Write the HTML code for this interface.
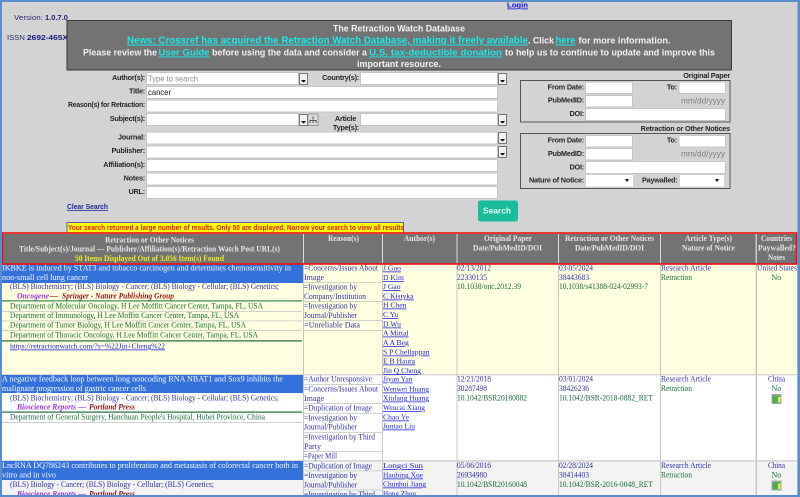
<!DOCTYPE html>
<html><head><meta charset="utf-8"><title>Retraction Watch Database</title>
<style>
html,body{margin:0;padding:0;width:800px;height:497px;overflow:hidden;background:#d3d3d3}
svg{display:block;filter:blur(.35px)}
text{white-space:pre}
.l{font:bold 7.3px "Liberation Sans",sans-serif;letter-spacing:-.22px;fill:#262626;text-anchor:end}
.i{font:8px "Liberation Sans",sans-serif;fill:#222}
.b{font:bold 9.2px "Liberation Sans",sans-serif;fill:#f2f2f2}
.c{font:bold 9.9px "Liberation Sans",sans-serif;fill:#19e8e8;text-decoration:underline}
.c2{font:bold 9.2px "Liberation Sans",sans-serif;fill:#19e8e8;text-decoration:underline}
.h{font:bold 8.1px "Liberation Serif",serif;fill:#e6e6e6}
.t{font:8.3px "Liberation Serif",serif;fill:#f4f6ff}
.s{font:8px "Liberation Serif",serif;fill:#3232a6}
.g{font:8px "Liberation Serif",serif;fill:#1c6b3c}
.a{font:7.6px "Liberation Serif",serif;fill:#1f1fe0;text-decoration:underline}
.p{font:italic bold 8px "Liberation Serif",serif;fill:#9a33d6}
.r{font:italic bold 8px "Liberation Serif",serif;fill:#8b1414}
</style></head><body>
<svg width="800" height="497" viewBox="0 0 800 497" xmlns="http://www.w3.org/2000/svg">
<rect width="800" height="497" fill="#d3d3d3"/>

<!-- version -->
<text x="14" y="20" style="font:7.6px 'Liberation Sans',sans-serif;fill:#2c2c78" textLength="29" lengthAdjust="spacingAndGlyphs">Version:</text>
<text x="45" y="20" style="font:bold 7.6px 'Liberation Sans',sans-serif;fill:#1c1c80" textLength="23" lengthAdjust="spacingAndGlyphs">1.0.7.0</text>
<text x="7" y="40" style="font:7.6px 'Liberation Sans',sans-serif;fill:#2c2c78" textLength="18" lengthAdjust="spacingAndGlyphs">ISSN</text>
<text x="27" y="40" style="font:bold 7.6px 'Liberation Sans',sans-serif;fill:#1c1c80" textLength="41" lengthAdjust="spacingAndGlyphs">2692-465X</text>
<text x="507" y="7.500" style="font:bold 7.6px 'Liberation Sans',sans-serif;fill:#1414e0;text-decoration:underline" textLength="21" lengthAdjust="spacingAndGlyphs">Login</text>

<!-- banner -->
<rect x="67" y="20.500" width="664.500" height="49.500" fill="#737373" stroke="#3a3a3a" stroke-width="1"/>
<text x="333" y="31.500" class="b" textLength="132" lengthAdjust="spacingAndGlyphs">The Retraction Watch Database</text>
<text x="127" y="43.500" class="c" textLength="401" lengthAdjust="spacingAndGlyphs">News: Crossref has acquired the Retraction Watch Database, making it freely available</text>
<text x="528" y="43.500" class="b" textLength="26" lengthAdjust="spacingAndGlyphs">. Click</text>
<text x="555.500" y="43.500" class="c" textLength="20" lengthAdjust="spacingAndGlyphs">here</text>
<text x="578.500" y="43.500" class="b" textLength="92" lengthAdjust="spacingAndGlyphs">for more information.</text>
<text x="83" y="55.500" class="b" textLength="74" lengthAdjust="spacingAndGlyphs">Please review the</text>
<text x="158.500" y="55.500" class="c2" textLength="51" lengthAdjust="spacingAndGlyphs">User Guide</text>
<text x="212" y="55.500" class="b" textLength="155" lengthAdjust="spacingAndGlyphs">before using the data and consider a</text>
<text x="369" y="55.500" class="c2" textLength="133" lengthAdjust="spacingAndGlyphs">U.S. tax-deductible donation</text>
<text x="505" y="55.500" class="b" textLength="210" lengthAdjust="spacingAndGlyphs">to help us to continue to update and improve this</text>
<text x="357" y="67" class="b" textLength="84" lengthAdjust="spacingAndGlyphs">important resource.</text>

<!-- left form inputs -->
<g fill="#fff" stroke="#c6c6c6" stroke-width="1">
<rect x="146.500" y="72.500" width="152" height="12"/>
<rect x="146.500" y="86.500" width="351" height="12"/>
<rect x="146.500" y="100" width="351" height="12"/>
<rect x="146.500" y="113.500" width="152" height="12"/>
<rect x="360.500" y="72.500" width="137" height="12"/>
<rect x="360.500" y="113.500" width="137" height="12"/>
<rect x="146.500" y="132" width="351" height="12"/>
<rect x="146.500" y="146" width="351" height="12"/>
<rect x="146.500" y="159.500" width="351" height="12"/>
<rect x="146.500" y="173" width="351" height="12"/>
<rect x="146.500" y="186.500" width="351" height="12"/>
</g>
<text x="148" y="81.500" class="i" style="fill:#8e8e8e" textLength="50" lengthAdjust="spacingAndGlyphs">Type to search</text>
<text x="148" y="95" class="i" textLength="23" lengthAdjust="spacingAndGlyphs">cancer</text>

<!-- dropdown buttons -->
<g fill="#f2f2f2" stroke="#777" stroke-width="1">
<rect x="299.500" y="73.500" width="8" height="11"/>
<rect x="299.500" y="114.500" width="8" height="11"/>
<rect x="498.500" y="73.500" width="8" height="11"/>
<rect x="498.500" y="114.500" width="8" height="11"/>
<rect x="498.500" y="132.500" width="8" height="11"/>
<rect x="498.500" y="146.500" width="8" height="11"/>
</g>
<g fill="#111">
<path d="M301.500 80h4v1l-2 1.500-2-1.500z"/>
<path d="M301.500 121h4v1l-2 1.500-2-1.500z"/>
<path d="M500.500 80h4v1l-2 1.500-2-1.500z"/>
<path d="M500.500 121h4v1l-2 1.500-2-1.500z"/>
<path d="M500.500 139h4v1l-2 1.500-2-1.500z"/>
<path d="M500.500 153h4v1l-2 1.500-2-1.500z"/>
</g>
<rect x="308" y="114" width="10" height="11.500" fill="#dcdcdc" stroke="#8a8a8a" stroke-width=".8"/>
<path d="M313 116.500v3M310 123v-2.500h6v2.500M313 120.500v2.500" fill="none" stroke="#555" stroke-width="1"/>

<!-- labels -->
<text x="145" y="80" class="l">Author(s):</text>
<text x="145" y="93.500" class="l">Title:</text>
<text x="145" y="107" class="l" textLength="77" lengthAdjust="spacingAndGlyphs" style="text-anchor:start" dx="-77">Reason(s) for Retraction:</text>
<text x="145" y="121" class="l">Subject(s):</text>
<text x="359" y="80" class="l">Country(s):</text>
<text x="345.500" y="121" class="l" style="text-anchor:middle">Article</text>
<text x="359" y="130" class="l">Type(s):</text>
<text x="145" y="139.500" class="l">Journal:</text>
<text x="145" y="153" class="l">Publisher:</text>
<text x="145" y="167" class="l">Affiliation(s):</text>
<text x="145" y="180.500" class="l">Notes:</text>
<text x="145" y="194" class="l">URL:</text>

<!-- Original paper box -->
<text x="730" y="78" class="l">Original Paper</text>
<rect x="520.500" y="80.500" width="209.500" height="41.500" fill="none" stroke="#555" stroke-width="1"/>
<g fill="#fff" stroke="#c6c6c6" stroke-width="1">
<rect x="585.500" y="82" width="47" height="11.500"/>
<rect x="679" y="82" width="46.500" height="11.500"/>
<rect x="585.500" y="95.500" width="47" height="11.500"/>
<rect x="585.500" y="108.500" width="140" height="12"/>
</g>
<text x="584" y="89.500" class="l">From Date:</text>
<text x="677" y="89.500" class="l">To:</text>
<text x="584" y="102.500" class="l">PubMedID:</text>
<text x="584" y="116" class="l">DOI:</text>
<text x="681" y="103.500" style="font:8px 'Liberation Sans',sans-serif;fill:#808080" textLength="44" lengthAdjust="spacingAndGlyphs">mm/dd/yyyy</text>

<!-- Notices box -->
<text x="730" y="131" class="l">Retraction or Other Notices</text>
<rect x="520.500" y="133.500" width="209.500" height="55" fill="none" stroke="#555" stroke-width="1"/>
<g fill="#fff" stroke="#c6c6c6" stroke-width="1">
<rect x="585.500" y="135.500" width="47" height="11.500"/>
<rect x="679" y="135.500" width="46.500" height="11.500"/>
<rect x="585.500" y="148.500" width="47" height="11.500"/>
<rect x="585.500" y="161.500" width="140" height="12"/>
</g>
<rect x="586" y="175" width="47" height="11.500" fill="#fff"/>
<rect x="680" y="175" width="44" height="11.500" fill="#fff"/>
<path d="M625 179h4l-2 3zM715 179h4l-2 3z" fill="#111"/>
<text x="584" y="142.500" class="l">From Date:</text>
<text x="677" y="142.500" class="l">To:</text>
<text x="584" y="156" class="l">PubMedID:</text>
<text x="584" y="169.500" class="l">DOI:</text>
<text x="584" y="182.500" class="l">Nature of Notice:</text>
<text x="677.500" y="182.500" class="l">Paywalled:</text>
<text x="681" y="156.500" style="font:8px 'Liberation Sans',sans-serif;fill:#808080" textLength="44" lengthAdjust="spacingAndGlyphs">mm/dd/yyyy</text>

<!-- search / clear -->
<rect x="478" y="200.500" width="40" height="21" rx="2.500" fill="#1abc9c"/>
<text x="483" y="213.500" style="font:bold 8.600px 'Liberation Sans',sans-serif;fill:#e8fff8" textLength="28" lengthAdjust="spacingAndGlyphs">Search</text>
<text x="67" y="209" style="font:bold 7.600px 'Liberation Sans',sans-serif;fill:#23239a;text-decoration:underline" textLength="41" lengthAdjust="spacingAndGlyphs">Clear Search</text>

<!-- warning -->
<rect x="67" y="222.500" width="336.500" height="10.500" fill="#ffff00" stroke="#3a3ad0" stroke-width=".8"/>
<text x="68" y="230" style="font:bold 7px 'Liberation Sans',sans-serif;fill:#d61c1c" textLength="336" lengthAdjust="spacingAndGlyphs">Your search returned a large number of results. Only 50 are displayed. Narrow your search to view all results</text>

<!-- table backgrounds -->
<rect x="2" y="264" width="795" height="110.500" fill="#ffffe2"/>
<rect x="2" y="375" width="795" height="86" fill="#fff"/>
<rect x="2" y="461" width="795" height="34" fill="#f3f3f3"/>
<rect x="2" y="234" width="795" height="30" fill="#737373"/>

<g fill="#c8c8c8">
<rect x="2" y="374.300" width="795" height="1"/>
<rect x="2" y="460.300" width="795" height="1.200"/>
<rect x="303" y="234" width="1" height="262"/>
<rect x="382" y="234" width="1" height="262"/>
<rect x="456.500" y="234" width="1" height="262"/>
<rect x="558" y="234" width="1" height="262"/>
<rect x="660" y="234" width="1" height="262"/>
<rect x="755.500" y="234" width="1.500" height="262"/>
</g>
<g fill="#dcdcdc">
<rect x="303" y="234" width="1" height="29"/><rect x="382" y="234" width="1" height="29"/><rect x="456.500" y="234" width="1" height="29"/><rect x="558" y="234" width="1" height="29"/><rect x="660" y="234" width="1" height="29"/>
</g>

<!-- header text -->
<text x="105" y="242.500" class="h" textLength="89" lengthAdjust="spacingAndGlyphs">Retraction or Other Notices</text>
<text x="19" y="251.500" class="h" textLength="261" lengthAdjust="spacingAndGlyphs">Title/Subject(s)/Journal — Publisher/Affiliation(s)/Retraction Watch Post URL(s)</text>
<text x="75" y="261" class="h" style="fill:#e8e82a" textLength="149" lengthAdjust="spacingAndGlyphs">50 Items Displayed Out of 3,056 Item(s) Found</text>
<text x="328" y="241" class="h" textLength="31" lengthAdjust="spacingAndGlyphs">Reason(s)</text>
<text x="404" y="241" class="h" textLength="31" lengthAdjust="spacingAndGlyphs">Author(s)</text>
<text x="484" y="241" class="h" textLength="48" lengthAdjust="spacingAndGlyphs">Original Paper</text>
<text x="473" y="250.500" class="h" textLength="69" lengthAdjust="spacingAndGlyphs">Date/PubMedID/DOI</text>
<text x="565" y="241" class="h" textLength="89" lengthAdjust="spacingAndGlyphs">Retraction or Other Notices</text>
<text x="575" y="250.500" class="h" textLength="69" lengthAdjust="spacingAndGlyphs">Date/PubMedID/DOI</text>
<text x="685" y="241" class="h" textLength="47" lengthAdjust="spacingAndGlyphs">Article Type(s)</text>
<text x="682" y="250.500" class="h" textLength="53" lengthAdjust="spacingAndGlyphs">Nature of Notice</text>
<text x="761" y="241" class="h" textLength="31" lengthAdjust="spacingAndGlyphs">Countries</text>
<text x="758" y="250.500" class="h" textLength="38" lengthAdjust="spacingAndGlyphs">Paywalled?</text>
<text x="768" y="260" class="h" textLength="17" lengthAdjust="spacingAndGlyphs">Notes</text>

<!-- row 1 -->
<svg x="0" y="264" width="800" height="111" viewBox="0 264 800 111">
<rect x="2" y="264" width="301" height="19" fill="#3571da"/>
<text x="2" y="270.500" class="t" textLength="289" lengthAdjust="spacingAndGlyphs">IKBKE is induced by STAT3 and tobacco carcinogen and determines chemosensitivity in</text>
<text x="2" y="280" class="t" textLength="86" lengthAdjust="spacingAndGlyphs">non-small cell lung cancer</text>
<text x="10" y="289" class="s" textLength="269" lengthAdjust="spacingAndGlyphs">(BLS) Biochemistry; (BLS) Biology - Cancer; (BLS) Biology - Cellular; (BLS) Genetics;</text>
<text x="17" y="298.500" class="p" textLength="32" lengthAdjust="spacingAndGlyphs">Oncogene</text>
<text x="50" y="298.500" class="p" style="fill:#8b1414" textLength="8" lengthAdjust="spacingAndGlyphs">—</text>
<text x="62" y="298.500" class="r" textLength="112" lengthAdjust="spacingAndGlyphs">Springer - Nature Publishing Group</text>
<rect x="2" y="300.300" width="300" height="1.200" fill="#3a8a58"/>
<text x="10" y="308.500" class="g" textLength="253" lengthAdjust="spacingAndGlyphs">Department of Molecular Oncology, H Lee Moffitt Cancer Center, Tampa, FL, USA</text>
<rect x="2" y="311" width="300" height=".8" fill="#c8c8c8"/>
<text x="10" y="318" class="g" textLength="229" lengthAdjust="spacingAndGlyphs">Department of Immunology, H Lee Moffitt Cancer Center, Tampa, FL, USA</text>
<rect x="2" y="320.500" width="300" height=".8" fill="#c8c8c8"/>
<text x="10" y="327.500" class="g" textLength="236" lengthAdjust="spacingAndGlyphs">Department of Tumor Biology, H Lee Moffitt Cancer Center, Tampa, FL, USA</text>
<rect x="2" y="330" width="300" height=".8" fill="#c8c8c8"/>
<text x="10" y="337.500" class="g" textLength="248" lengthAdjust="spacingAndGlyphs">Department of Thoracic Oncology, H Lee Moffitt Cancer Center, Tampa, FL, USA</text>
<rect x="2" y="340.300" width="300" height="1.200" fill="#1f6b3a"/>
<text x="10" y="348.500" class="a" textLength="155" lengthAdjust="spacingAndGlyphs">https://retractionwatch.com/?s=%22Jin+Cheng%22</text>

<text x="304" y="270.500" class="s" textLength="74" lengthAdjust="spacingAndGlyphs">=Concerns/Issues About</text>
<text x="304" y="280" class="s" textLength="20" lengthAdjust="spacingAndGlyphs">Image</text>
<rect x="304" y="282" width="78" height=".8" fill="#c8c8c8"/>
<text x="304" y="289.500" class="s" textLength="53" lengthAdjust="spacingAndGlyphs">=Investigation by</text>
<text x="304" y="299" class="s" textLength="62" lengthAdjust="spacingAndGlyphs">Company/Institution</text>
<rect x="304" y="301" width="78" height=".8" fill="#c8c8c8"/>
<text x="304" y="308.500" class="s" textLength="53" lengthAdjust="spacingAndGlyphs">=Investigation by</text>
<text x="304" y="318" class="s" textLength="53" lengthAdjust="spacingAndGlyphs">Journal/Publisher</text>
<rect x="304" y="320" width="78" height=".8" fill="#c8c8c8"/>
<text x="304" y="327.500" class="s" textLength="56" lengthAdjust="spacingAndGlyphs">=Unreliable Data</text>
<rect x="304" y="330" width="78" height=".8" fill="#c8c8c8"/>

<text x="383" y="270.500" class="a">J Guo</text>
<text x="383" y="280" class="a">D Kim</text>
<text x="383" y="289" class="a">J Gao</text>
<text x="383" y="298.500" class="a">C Kistyka</text>
<text x="383" y="307.500" class="a">H Chen</text>
<text x="383" y="317" class="a">C Yu</text>
<text x="383" y="326.500" class="a">D Wu</text>
<text x="383" y="335.500" class="a">A Mittal</text>
<text x="383" y="345" class="a">A A Beg</text>
<text x="383" y="354.500" class="a">S P Chellappan</text>
<text x="383" y="363.500" class="a">E B Haura</text>
<text x="383" y="373" class="a">Jin Q Cheng</text>

<text x="457" y="270.500" class="s" textLength="34" lengthAdjust="spacingAndGlyphs">02/13/2012</text>
<text x="457" y="280" class="s" textLength="30" lengthAdjust="spacingAndGlyphs">22330135</text>
<text x="457" y="289" class="g" textLength="64" lengthAdjust="spacingAndGlyphs">10.1038/onc.2012.39</text>
<text x="559" y="270.500" class="s" textLength="34" lengthAdjust="spacingAndGlyphs">03/05/2024</text>
<text x="559" y="280" class="s" textLength="30" lengthAdjust="spacingAndGlyphs">38443683</text>
<text x="559" y="289" class="g" textLength="89" lengthAdjust="spacingAndGlyphs">10.1038/s41388-024-02993-7</text>
<text x="661" y="270.500" class="s" textLength="50" lengthAdjust="spacingAndGlyphs">Research Article</text>
<text x="661" y="280" class="g" textLength="31" lengthAdjust="spacingAndGlyphs">Retraction</text>
<text x="757" y="270.500" class="s" textLength="40" lengthAdjust="spacingAndGlyphs">United States</text>
<text x="771.500" y="280" class="g">No</text>
</svg>

<!-- row 2 -->
<rect x="2" y="375" width="301" height="18" fill="#3571da"/>
<text x="2" y="381.500" class="t" textLength="281" lengthAdjust="spacingAndGlyphs">A negative feedback loop between long noncoding RNA NBAT1 and Sox9 inhibits the</text>
<text x="2" y="391" class="t" textLength="144" lengthAdjust="spacingAndGlyphs">malignant progression of gastric cancer cells</text>
<text x="10" y="400.500" class="s" textLength="269" lengthAdjust="spacingAndGlyphs">(BLS) Biochemistry; (BLS) Biology - Cancer; (BLS) Biology - Cellular; (BLS) Genetics;</text>
<text x="17" y="409.500" class="p" textLength="59" lengthAdjust="spacingAndGlyphs">Bioscience Reports</text>
<text x="78" y="409.500" class="p" textLength="8" lengthAdjust="spacingAndGlyphs">—</text>
<text x="89" y="409.500" class="r" textLength="46" lengthAdjust="spacingAndGlyphs">Portland Press</text>
<rect x="2" y="411.500" width="300" height="1.200" fill="#1f6b3a"/>
<text x="10" y="419.500" class="g" textLength="255" lengthAdjust="spacingAndGlyphs">Department of General Surgery, Hanchuan People's Hospital, Hubei Province, China</text>
<rect x="2" y="422" width="300" height=".8" fill="#c8c8c8"/>

<text x="304" y="381.500" class="s" textLength="68" lengthAdjust="spacingAndGlyphs">=Author Unresponsive</text>
<rect x="304" y="384" width="78" height=".8" fill="#c8c8c8"/>
<text x="304" y="391.500" class="s" textLength="74" lengthAdjust="spacingAndGlyphs">=Concerns/Issues About</text>
<text x="304" y="401" class="s" textLength="20" lengthAdjust="spacingAndGlyphs">Image</text>
<rect x="304" y="403" width="78" height=".8" fill="#c8c8c8"/>
<text x="304" y="410.500" class="s" textLength="68" lengthAdjust="spacingAndGlyphs">=Duplication of Image</text>
<rect x="304" y="413" width="78" height=".8" fill="#c8c8c8"/>
<text x="304" y="420.500" class="s" textLength="53" lengthAdjust="spacingAndGlyphs">=Investigation by</text>
<text x="304" y="429.500" class="s" textLength="53" lengthAdjust="spacingAndGlyphs">Journal/Publisher</text>
<rect x="304" y="432" width="78" height=".8" fill="#c8c8c8"/>
<text x="304" y="439.500" class="s" textLength="71" lengthAdjust="spacingAndGlyphs">=Investigation by Third</text>
<text x="304" y="449" class="s" textLength="17" lengthAdjust="spacingAndGlyphs">Party</text>
<rect x="304" y="451" width="78" height=".8" fill="#c8c8c8"/>
<text x="304" y="458.500" class="s" textLength="33" lengthAdjust="spacingAndGlyphs">=Paper Mill</text>

<text x="383" y="381.500" class="a">Jiyan Yan</text>
<text x="383" y="391.500" class="a" textLength="46" lengthAdjust="spacingAndGlyphs">Wenwei Huang</text>
<text x="383" y="400.500" class="a" textLength="46" lengthAdjust="spacingAndGlyphs">Xiufang Huang</text>
<text x="383" y="410" class="a" textLength="42" lengthAdjust="spacingAndGlyphs">Wencai Xiang</text>
<text x="383" y="419.500" class="a" textLength="26" lengthAdjust="spacingAndGlyphs">Chao Ye</text>
<text x="383" y="428.500" class="a" textLength="32" lengthAdjust="spacingAndGlyphs">Juntao Liu</text>

<text x="457" y="381.500" class="s" textLength="34" lengthAdjust="spacingAndGlyphs">12/21/2018</text>
<text x="457" y="391" class="s" textLength="30" lengthAdjust="spacingAndGlyphs">30287498</text>
<text x="457" y="400.500" class="g" textLength="70" lengthAdjust="spacingAndGlyphs">10.1042/BSR20180882</text>
<text x="559" y="381.500" class="s" textLength="34" lengthAdjust="spacingAndGlyphs">03/01/2024</text>
<text x="559" y="391" class="s" textLength="30" lengthAdjust="spacingAndGlyphs">38426236</text>
<text x="559" y="400.500" class="g" textLength="94" lengthAdjust="spacingAndGlyphs">10.1042/BSR-2018-0882_RET</text>
<text x="661" y="381.500" class="s" textLength="50" lengthAdjust="spacingAndGlyphs">Research Article</text>
<text x="661" y="391" class="g" textLength="31" lengthAdjust="spacingAndGlyphs">Retraction</text>
<text x="768" y="381.500" class="s" textLength="17" lengthAdjust="spacingAndGlyphs">China</text>
<text x="771.500" y="391" class="g">No</text>
<rect x="771.500" y="394" width="10" height="10" fill="#a8a8a8"/>
<rect x="772.500" y="395.500" width="8" height="7.500" fill="#4fae52"/>
<rect x="778" y="397" width="2.500" height="5.500" fill="#f2e84a"/>

<!-- row 3 -->
<rect x="2" y="461" width="301" height="19" fill="#3571da"/>
<text x="2" y="468" class="t" textLength="296" lengthAdjust="spacingAndGlyphs">LncRNA DQ786243 contributes to proliferation and metastasis of colorectal cancer both in</text>
<text x="2" y="477.500" class="t" textLength="54" lengthAdjust="spacingAndGlyphs">vitro and in vivo</text>
<text x="10" y="487" class="s" textLength="204" lengthAdjust="spacingAndGlyphs">(BLS) Biology - Cancer; (BLS) Biology - Cellular; (BLS) Genetics;</text>
<text x="17" y="496.500" class="p" textLength="59" lengthAdjust="spacingAndGlyphs">Bioscience Reports</text>
<text x="78" y="496.500" class="p" textLength="8" lengthAdjust="spacingAndGlyphs">—</text>
<text x="89" y="496.500" class="r" textLength="46" lengthAdjust="spacingAndGlyphs">Portland Press</text>

<text x="304" y="468.500" class="s" textLength="68" lengthAdjust="spacingAndGlyphs">=Duplication of Image</text>
<rect x="304" y="470.500" width="78" height=".8" fill="#c8c8c8"/>
<text x="304" y="478" class="s" textLength="53" lengthAdjust="spacingAndGlyphs">=Investigation by</text>
<text x="304" y="487.500" class="s" textLength="53" lengthAdjust="spacingAndGlyphs">Journal/Publisher</text>
<rect x="304" y="489.500" width="78" height=".8" fill="#c8c8c8"/>
<text x="304" y="497" class="s" textLength="71" lengthAdjust="spacingAndGlyphs">=Investigation by Third</text>

<text x="383" y="468" class="a" textLength="40" lengthAdjust="spacingAndGlyphs">Longci Sun</text>
<text x="383" y="477.500" class="a" textLength="40" lengthAdjust="spacingAndGlyphs">Haubing Xue</text>
<text x="383" y="486.500" class="a" textLength="43" lengthAdjust="spacingAndGlyphs">Chunhui Jiang</text>
<text x="383" y="496" class="a" textLength="33" lengthAdjust="spacingAndGlyphs">Hong Zhou</text>

<text x="457" y="468" class="s" textLength="34" lengthAdjust="spacingAndGlyphs">05/06/2016</text>
<text x="457" y="477.500" class="s" textLength="30" lengthAdjust="spacingAndGlyphs">26934980</text>
<text x="457" y="487" class="g" textLength="70" lengthAdjust="spacingAndGlyphs">10.1042/BSR20160048</text>
<text x="559" y="468" class="s" textLength="34" lengthAdjust="spacingAndGlyphs">02/28/2024</text>
<text x="559" y="477.500" class="s" textLength="30" lengthAdjust="spacingAndGlyphs">38414403</text>
<text x="559" y="487" class="g" textLength="94" lengthAdjust="spacingAndGlyphs">10.1042/BSR-2016-0048_RET</text>
<text x="661" y="468" class="s" textLength="50" lengthAdjust="spacingAndGlyphs">Research Article</text>
<text x="661" y="477.500" class="g" textLength="31" lengthAdjust="spacingAndGlyphs">Retraction</text>
<text x="768" y="468" class="s" textLength="17" lengthAdjust="spacingAndGlyphs">China</text>
<text x="771.500" y="477.500" class="g">No</text>
<rect x="771.500" y="480.500" width="10" height="10" fill="#a8a8a8"/>
<rect x="772.500" y="482" width="8" height="7.500" fill="#4fae52"/>
<rect x="778" y="483.500" width="2.500" height="5.500" fill="#f2e84a"/>

<!-- red highlight -->
<rect x="2.500" y="233" width="794" height="31" fill="none" stroke="#f01010" stroke-width="1.600"/>

<!-- window frame -->
<rect x="0" y="0" width="800" height="2" fill="#5b8ccb"/>
<rect x="0" y="0" width="2" height="497" fill="#5b8ccb"/>
<rect x="797.500" y="0" width="2.500" height="497" fill="#5b8ccb"/>
<rect x="0" y="495" width="800" height="2" fill="#5b8ccb"/>
</svg>
</body></html>
